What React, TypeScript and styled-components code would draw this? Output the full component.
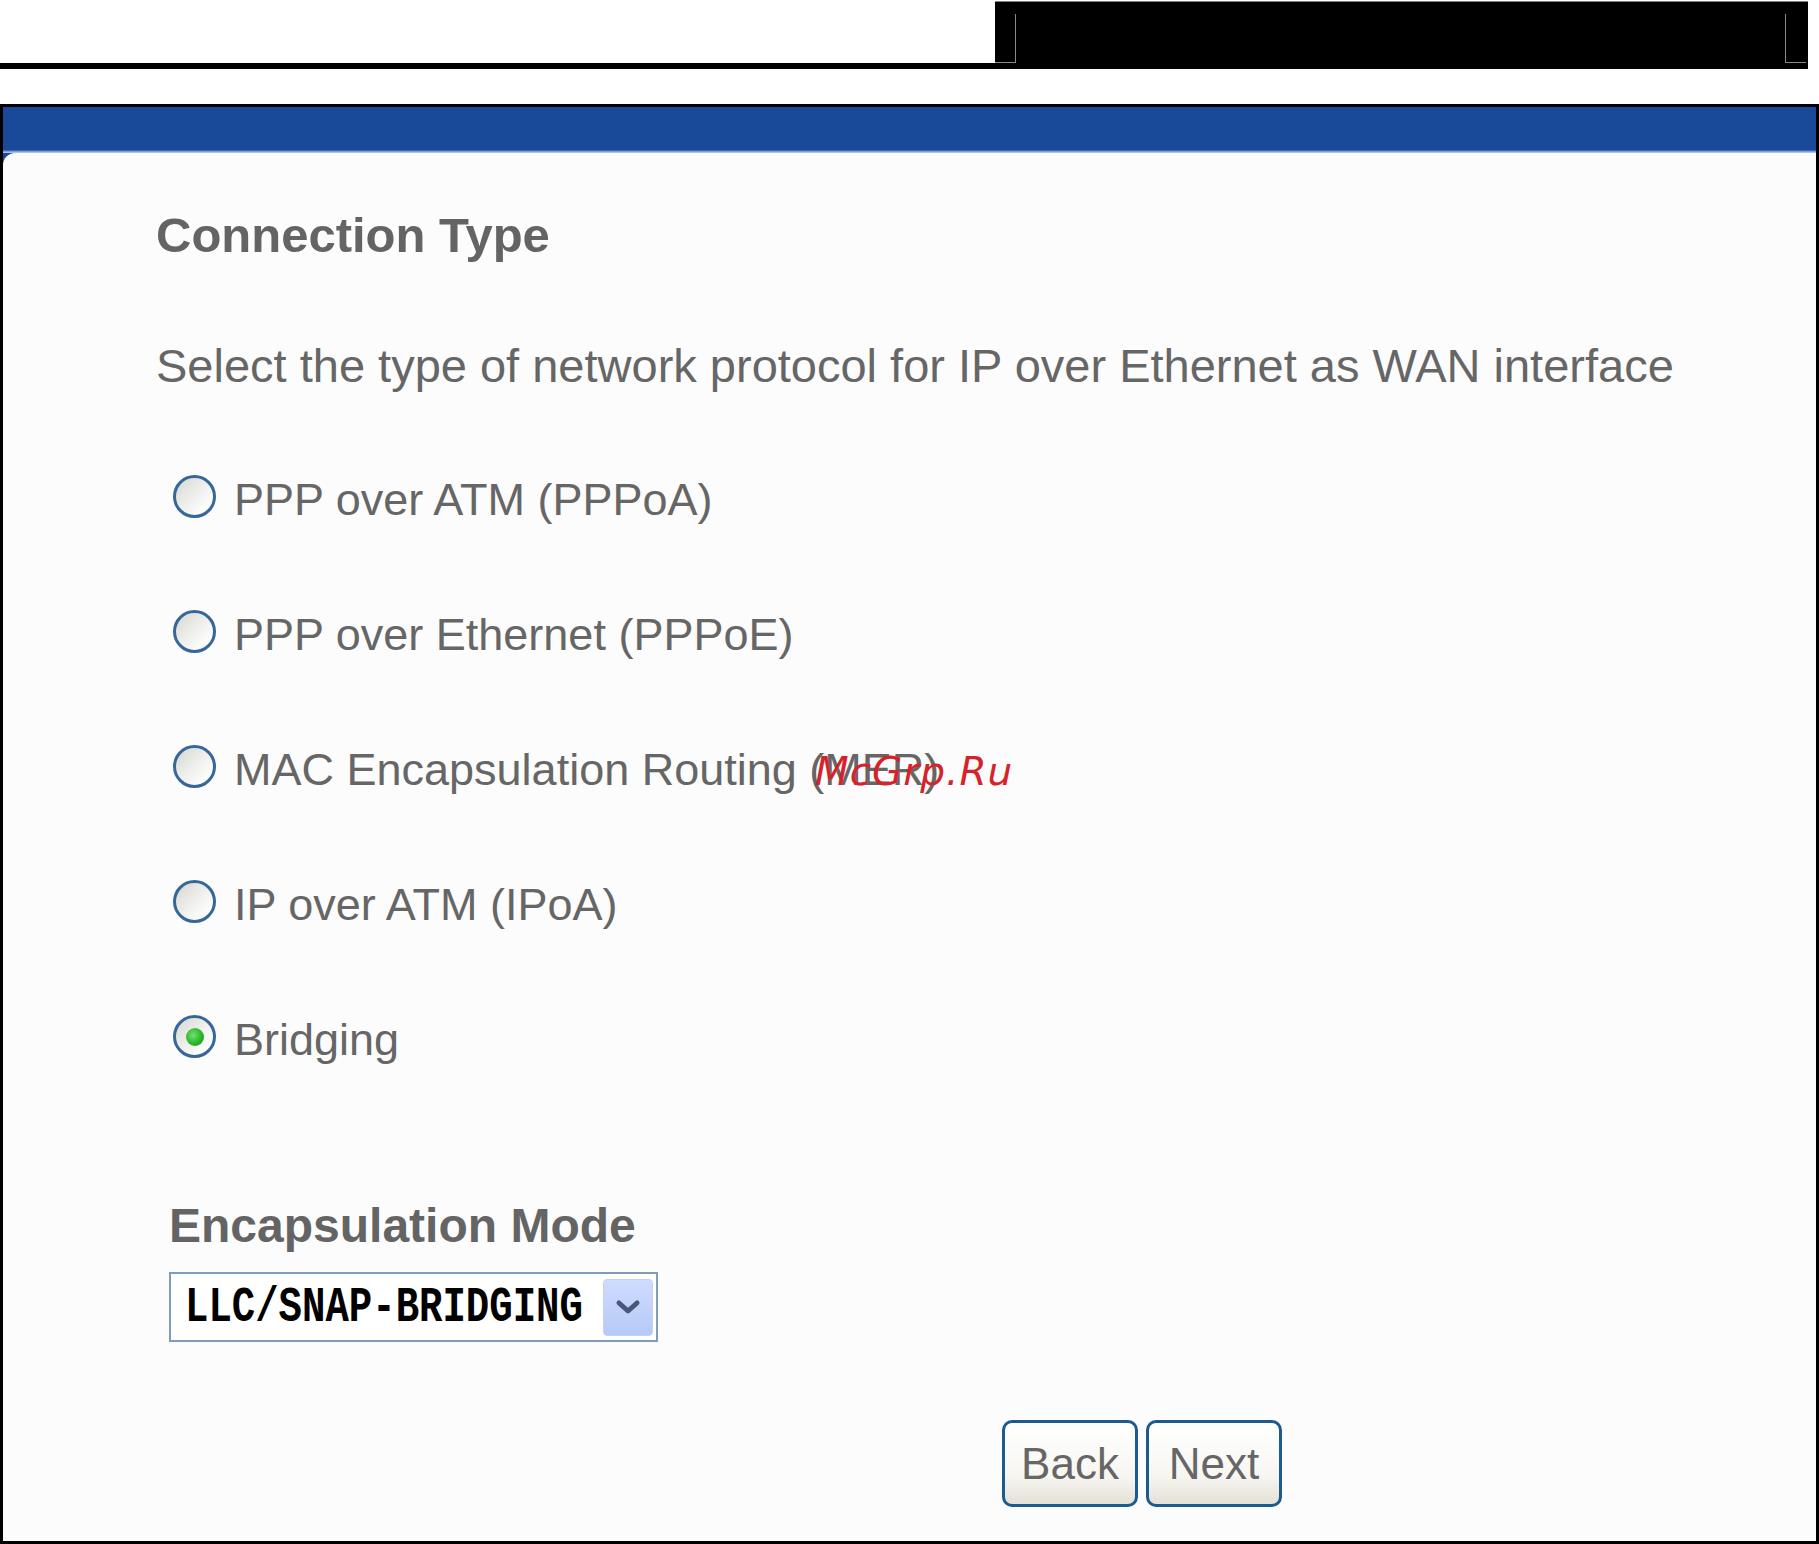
import styled, { createGlobalStyle } from 'styled-components';

const GlobalStyle = createGlobalStyle`
  html, body {
    margin: 0;
    padding: 0;
    background: #ffffff;
  }
  body {
    font-family: "Liberation Sans", Arial, sans-serif;
  }
  * {
    box-sizing: border-box;
  }
`;

const Screen = styled.div`
  width: 1819px;
  height: 1544px;
  display: flex;
  flex-direction: column;
  background: #ffffff;
  overflow: hidden;
`;

const TopBar = styled.div`
  display: flex;
  width: 1808px;
  height: 69px;
  flex-shrink: 0;
`;

const TopRule = styled.div`
  flex: 1;
  border-bottom: 6px solid #000000;
`;

const TabStrip = styled.div`
  width: 813px;
  margin-top: 1px;
  background: #000000;
  border-top: 1px solid #808080;
  display: flex;
  justify-content: space-between;
  align-items: flex-end;
  padding: 0 2px 6px 0;
`;

const TabEdge = styled.span<{ $side: 'left' | 'right' }>`
  width: 21px;
  height: 49px;
  border-bottom: 1px solid #8a8a8a;
  border-right: ${(p) => (p.$side === 'left' ? '1px solid #8a8a8a' : 'none')};
  border-left: ${(p) => (p.$side === 'right' ? '1px solid #8a8a8a' : 'none')};
`;

const Panel = styled.div`
  margin-top: 35px;
  height: 1440px;
  border: 3px solid #000000;
  background: #194a9a;
  display: flex;
  flex-direction: column;
`;

const PanelHeader = styled.div`
  height: 46px;
  flex-shrink: 0;
  background: linear-gradient(
    to bottom,
    #194a9a 0,
    #194a9a 43px,
    #6d8cc6 44px,
    #c4d2ec 46px
  );
`;

const Content = styled.div`
  position: relative;
  flex: 1;
  background: #fcfcfc;
  border-top-left-radius: 12px;
  padding-top: 58px;
  display: flex;
  flex-direction: column;
`;

const IntroBlock = styled.div`
  padding-left: 153px;
  display: flex;
  flex-direction: column;
  gap: 82px;
`;

const SectionTitle = styled.h2<{ $size: number }>`
  margin: 0;
  font-size: ${(p) => p.$size}px;
  line-height: ${(p) => p.$size}px;
  font-weight: 700;
  color: #646464;
`;

const Description = styled.p`
  margin: 0;
  font-size: 47px;
  line-height: 47px;
  color: #666666;
  white-space: nowrap;
`;

const RadioList = styled.div`
  margin-top: 82px;
  padding-left: 170px;
  display: flex;
  flex-direction: column;
  gap: 84px;
`;

const RadioRow = styled.label`
  display: flex;
  align-items: center;
  gap: 18px;
`;

const RadioCircle = styled.span<{ $checked?: boolean }>`
  width: 43px;
  height: 43px;
  flex-shrink: 0;
  border-radius: 50%;
  border: 3px solid #36679a;
  background: linear-gradient(135deg, #d6d6d0 0%, #ededea 45%, #ffffff 85%);
  display: flex;
  align-items: center;
  justify-content: center;

  &::after {
    content: '';
    display: ${(p) => (p.$checked ? 'block' : 'none')};
    width: 18px;
    height: 18px;
    border-radius: 50%;
    background: radial-gradient(circle at 40% 40%, #6fe26f 0%, #2cb52c 55%, #1a8f1a 100%);
  }
`;

const RadioLabel = styled.span`
  margin-top: 6px;
  font-size: 45px;
  line-height: 45px;
  color: #666666;
  white-space: nowrap;
`;

const EncapBlock = styled.div`
  margin-top: 140px;
  padding-left: 166px;
  display: flex;
  flex-direction: column;
  gap: 22px;
`;

const SelectField = styled.div`
  width: 489px;
  height: 70px;
  border: 2px solid #7f9db9;
  background: #ffffff;
  display: flex;
  align-items: center;
  justify-content: space-between;
  padding: 0 3px 0 14px;
`;

const SelectValue = styled.span`
  display: inline-block;
  font-family: "Liberation Mono", "Courier New", monospace;
  font-weight: 700;
  font-size: 39px;
  line-height: 39px;
  color: #000000;
  white-space: nowrap;
  transform: scaleY(1.3);
  margin-top: 2px;
`;

const DropButton = styled.span`
  width: 50px;
  height: 57px;
  border-radius: 4px;
  border: 1px solid #c3d2f2;
  background: linear-gradient(to bottom, #cfdcfd 0%, #b6c9f7 100%);
  display: flex;
  align-items: center;
  justify-content: center;
`;

const ButtonBar = styled.div`
  margin-top: 78px;
  padding-left: 999px;
  display: flex;
  gap: 8px;
`;

const WizardButton = styled.button`
  width: 136px;
  height: 87px;
  border: 3px solid #1d5a8e;
  border-radius: 10px;
  background: linear-gradient(to bottom, #ffffff 0%, #f7f6f1 65%, #e4e1d6 100%);
  font-family: "Liberation Sans", Arial, sans-serif;
  font-size: 44px;
  color: #666666;
  padding: 0;
  display: flex;
  align-items: center;
  justify-content: center;
  cursor: pointer;
`;

const Watermark = styled.span`
  position: absolute;
  left: 812px;
  top: 599px;
  font-family: "DejaVu Sans", Verdana, sans-serif;
  font-style: italic;
  font-size: 39px;
  line-height: 39px;
  letter-spacing: 1px;
  color: #d6232b;
  pointer-events: none;
`;

const OPTIONS = [
  { id: 'pppoa', label: 'PPP over ATM (PPPoA)' },
  { id: 'pppoe', label: 'PPP over Ethernet (PPPoE)' },
  { id: 'mer', label: 'MAC Encapsulation Routing (MER)' },
  { id: 'ipoa', label: 'IP over ATM (IPoA)' },
  { id: 'bridge', label: 'Bridging' },
];

export default function App() {
  const selected = 'bridge';

  return (
    <>
      <GlobalStyle />
      <Screen>
        <TopBar>
          <TopRule />
          <TabStrip>
            <TabEdge $side="left" />
            <TabEdge $side="right" />
          </TabStrip>
        </TopBar>

        <Panel>
          <PanelHeader />
          <Content>
            <IntroBlock>
              <SectionTitle $size={49}>Connection Type</SectionTitle>
              <Description>
                Select the type of network protocol for IP over Ethernet as WAN interface
              </Description>
            </IntroBlock>

            <RadioList>
              {OPTIONS.map((o) => (
                <RadioRow key={o.id}>
                  <RadioCircle $checked={o.id === selected} />
                  <RadioLabel>{o.label}</RadioLabel>
                </RadioRow>
              ))}
            </RadioList>

            <EncapBlock>
              <SectionTitle as="h3" $size={48}>
                Encapsulation Mode
              </SectionTitle>
              <SelectField>
                <SelectValue>LLC/SNAP-BRIDGING</SelectValue>
                <DropButton>
                  <svg width="26" height="16" viewBox="0 0 26 16">
                    <path
                      d="M4 4 L13 12 L22 4"
                      fill="none"
                      stroke="#46597d"
                      strokeWidth="5"
                      strokeLinecap="round"
                      strokeLinejoin="round"
                    />
                  </svg>
                </DropButton>
              </SelectField>
            </EncapBlock>

            <ButtonBar>
              <WizardButton>Back</WizardButton>
              <WizardButton>Next</WizardButton>
            </ButtonBar>

            <Watermark>McGrp.Ru</Watermark>
          </Content>
        </Panel>
      </Screen>
    </>
  );
}
